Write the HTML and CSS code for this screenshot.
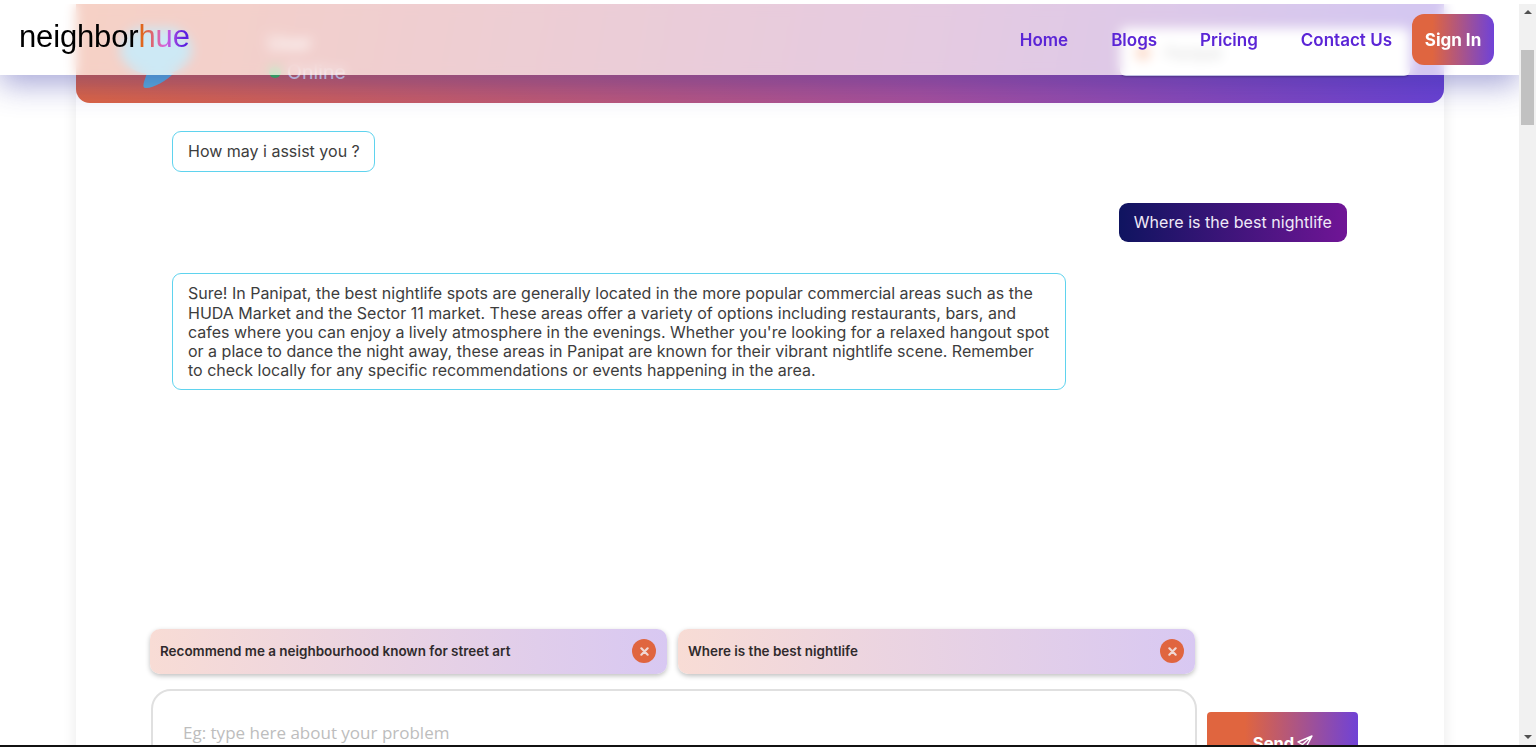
FILE: index.html
```html
<!DOCTYPE html>
<html lang="en">
<head>
<meta charset="utf-8">
<title>neighborhue</title>
<link rel="stylesheet" href="styles.css">
</head>
<body>
<div class="viewport">
  <div class="scroller">
    <nav class="nav">
      <a class="logo">neighbor<span class="logo-hue">hue</span></a>
      <div class="nav-links">
        <a class="nav-link">Home</a>
        <a class="nav-link">Blogs</a>
        <a class="nav-link">Pricing</a>
        <a class="nav-link">Contact Us</a>
        <a class="sign-in">Sign In</a>
      </div>
    </nav>
    <main class="card">
      <header class="chat-head">
        <svg class="bot-icon" width="80" height="64" viewBox="0 0 80 64"><ellipse cx="40" cy="22" rx="36" ry="25" fill="#58b4dc"/><path d="M32 42 L58 45 C50 53 38 60 30 60 C25 60 28 54 32 42Z" fill="#58b4dc"/></svg>
        <div class="who">
          <div class="who-name">User</div>
          <div class="who-status"><span class="dot"></span>Online</div>
        </div>
        <div class="head-box"><span class="head-box-dot"></span>Panipat</div>
      </header>
      <section class="messages">
        <div class="bubble">How may i assist you ?</div>
        <div class="bubble-user">Where is the best nightlife</div>
        <div class="bubble bubble-wide">Sure! In Panipat, the best nightlife spots are generally located in the more popular commercial areas such as the HUDA Market and the Sector 11 market. These areas offer a variety of options including restaurants, bars, and cafes where you can enjoy a lively atmosphere in the evenings. Whether you're looking for a relaxed hangout spot or a place to dance the night away, these areas in Panipat are known for their vibrant nightlife scene. Remember to check locally for any specific recommendations or events happening in the area.</div>
      </section>
      <section class="chips">
        <div class="chip"><span>Recommend me a neighbourhood known for street art</span><span class="chip-x"><svg width="9" height="9" viewBox="0 0 10 10"><path d="M1.5 1.5 L8.5 8.5 M8.5 1.5 L1.5 8.5" stroke="#f0d8d4" stroke-width="2.4" stroke-linecap="round"/></svg></span></div>
        <div class="chip"><span>Where is the best nightlife</span><span class="chip-x"><svg width="9" height="9" viewBox="0 0 10 10"><path d="M1.5 1.5 L8.5 8.5 M8.5 1.5 L1.5 8.5" stroke="#f0d8d4" stroke-width="2.4" stroke-linecap="round"/></svg></span></div>
      </section>
      <section class="composer">
        <div class="input">Eg: type here about your problem</div>
        <button class="send">Send <svg width="16" height="16" viewBox="0 0 16 16"><path d="M15 1 L1 7 L5.5 9.5 L7.5 15 Z M15 1 L5.5 9.5" fill="none" stroke="#fff" stroke-width="1.4" stroke-linejoin="round"/></svg></button>
      </section>
    </main>
  </div>
  <div class="scrollbar">
    <span class="arrow-up"></span>
    <div class="thumb-track"><div class="thumb"></div></div>
    <span class="arrow-down"></span>
  </div>
</div>
</body>
</html>
```
FILE: styles.css
```css
* { box-sizing: border-box; }
html, body { margin: 0; height: 747px; overflow: hidden; }
body {
  background: #fff;
  padding-top: 4px;
  border-bottom: 2px solid #111;
  font-family: Inter, "Liberation Sans", sans-serif;
}
.viewport { display: flex; height: 741px; }
.scroller { position: relative; flex: 1; overflow: hidden; background: #fff; }

/* nav floats over the page */
.nav {
  position: absolute;
  top: 0; left: 0; right: 0;
  z-index: 5;
  height: 71px;
  padding: 0 25px 0 19px;
  display: flex;
  align-items: center;
  justify-content: space-between;
  background: rgba(255,255,255,.7);
  backdrop-filter: blur(6px);
  box-shadow: 0 10px 30px rgba(50,50,165,.42);
}
.logo { font-family: "Liberation Sans", Arial, sans-serif; font-size: 31px; color: #000; letter-spacing: -.15px; margin-top: -5px; }
.logo-hue {
  background: linear-gradient(90deg, #e0661c 8%, #d866e0 52%, #5a1fe0 88%);
  -webkit-background-clip: text;
  background-clip: text;
  color: transparent;
}
.nav-links { display: flex; align-items: center; }
.nav-link { font-size: 17px; font-weight: 600; color: #5b25d6; margin-right: 43px; }
.nav-link:nth-child(4) { margin-right: 20px; }
.sign-in {
  width: 82px; height: 51px;
  display: flex; align-items: center; justify-content: center;
  border-radius: 12px;
  font-size: 17px; font-weight: 700; color: #fff;
  background: linear-gradient(90deg, #df6540 25%, #6f42d8 100%);
}

/* card */
.card {
  width: 1368px;
  margin-left: 76px;
  height: 900px;
  background: #fff;
  box-shadow: 0 0 14px rgba(0,0,0,.09);
}
.chat-head {
  position: relative;
  height: 99px;
  display: flex;
  align-items: flex-start;
  border-radius: 0 0 14px 14px;
  background: linear-gradient(100deg, #e0653f 0%, #a8509a 62%, #6a42d2 100%);
  color: #fff;
}
.bot-icon { margin: 24px 0 0 40px; flex: none; }
.who { margin: 27px 0 0 72px; font-size: 19.5px; }
.who-name { font-weight: 600; color: #fff; }
.who-status { display: flex; align-items: center; margin-top: 5px; color: #e8dfe8; }
.dot { width: 12px; height: 12px; border-radius: 50%; background: #35c448; margin: 0 6px 0 1px; }
.head-box {
  margin: 24px 34px 0 auto;
  width: 290px; height: 48px;
  display: flex; align-items: center;
  padding: 2px 0 0 16px;
  background: #fff;
  border-radius: 6px;
  box-shadow: 0 1px 2px rgba(0,0,0,.3);
  color: #777; font-size: 16px;
}
.head-box-dot { width: 14px; height: 14px; border-radius: 50%; background: #f07030; margin-right: 15px; }

/* messages */
.messages {
  height: 526px;
  padding: 28px 97px 0 96px;
  display: flex;
  flex-direction: column;
  align-items: flex-start;
}
.bubble {
  padding: 10px 14px 10px 15px;
  border: 1px solid #5fd3ee;
  border-radius: 9px;
  font-size: 16px;
  line-height: 19.2px;
  color: #3d3d3d;
}
.bubble-user {
  align-self: flex-end;
  margin-top: 31px;
  padding: 10px 15px;
  border-radius: 9px;
  font-size: 16px;
  line-height: 19.2px;
  letter-spacing: .04px;
  color: #f0eaf8;
  background: linear-gradient(90deg, #0f1460 0%, #701596 100%);
}
.bubble-wide { width: 894px; margin-top: 31px; padding: 10px 15px 9px; }

/* chips */
.chips { display: flex; gap: 11.5px; padding-left: 74px; }
.chip {
  width: 516.5px; height: 45px;
  padding: 0 10.5px 1px 10px;
  display: flex; align-items: center; justify-content: space-between;
  border-radius: 10px;
  font-size: 13.46px; font-weight: 600; color: #2f2a2c;
  background: linear-gradient(90deg, #f8dcd5 0%, #d8c8f2 100%);
  box-shadow: 0 2px 5px rgba(0,0,0,.25);
}
.chip-x {
  width: 24px; height: 24px; flex: none;
  display: flex; align-items: center; justify-content: center;
  border-radius: 50%;
  background: #e0653f;
}

/* composer */
.composer { display: flex; align-items: flex-start; gap: 10px; padding: 15px 0 0 75px; }
.input {
  width: 1046px; height: 100px;
  padding: 30px 30px 0;
  border: 2px solid #e0e0e0;
  border-radius: 20px;
  font-family: "Open Sans", sans-serif;
  font-size: 17px;
  color: #bdbdbd;
}
.send {
  width: 151px; height: 62px;
  margin-top: 23px;
  padding: 0 0 0 1px;
  border: 0;
  border-radius: 4px;
  display: flex; align-items: center; justify-content: center; gap: 3px;
  font-family: Inter, sans-serif;
  font-size: 16.5px; font-weight: 700; color: #fff;
  background: linear-gradient(90deg, #e0653f 25%, #7042d6 100%);
}

/* scrollbar */
.scrollbar {
  width: 17px; flex: none;
  display: flex; flex-direction: column; align-items: center;
  background: #f1f1f1;
}
.arrow-up { margin-top: 6px; border: 4px solid transparent; border-top: 0; border-bottom: 4px solid #505050; }
.thumb-track { flex: 1; width: 100%; padding: 36px 2px 0; }
.thumb { height: 75px; background: #c1c1c1; }
.arrow-down { margin-bottom: 6px; border: 4px solid transparent; border-bottom: 0; border-top: 4px solid #505050; }
```
